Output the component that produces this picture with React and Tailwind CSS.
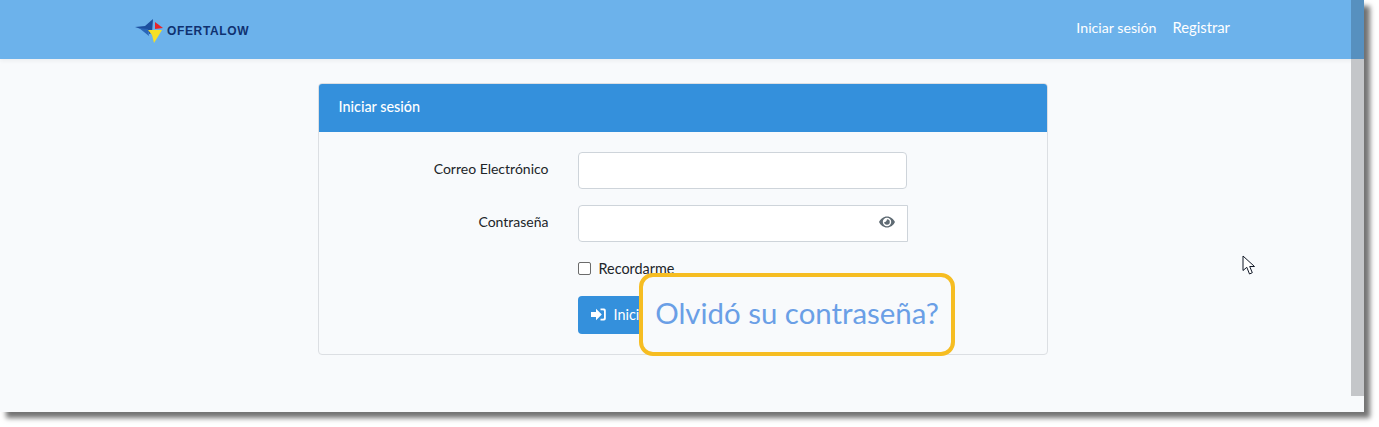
import React from "react";

function Logo() {
  return (
    <div className="flex translate-y-[1px] items-center">
      <svg width="29" height="24" viewBox="0 0 29 24" className="shrink-0">
        <path d="M0 8 L10 7 L18 0 L17 14 L14 15 L13 11 L9 11 Z" fill="#1d4f9f" />
        <path d="M4 9 L13 10 L14 17 Z" fill="#2a66b8" />
        <path d="M20 3 L28 9 L20 10 Z" fill="#e8232a" />
        <path d="M13 11 L27 11 L19 24 L17 16 Z" fill="#f6e024" />
      </svg>
      <span className="ml-[3px] text-[12px] font-bold tracking-[0.65px] text-[#0f3170] font-['Liberation_Sans',sans-serif] leading-none">OFERTALOW</span>
    </div>
  );
}

function Row({ label, children, className }) {
  return (
    <div className={"flex items-center " + className}>
      <label className="w-[230px] -translate-y-[2px] text-right text-[14px] text-[#212529]">{label}</label>
      <div className="ml-[29px]">{children}</div>
    </div>
  );
}

export default function App() {
  return (
    <div className="h-[427px] w-[1379px] overflow-hidden bg-white font-['Lato','Noto_Sans',sans-serif]">
      <div className="relative flex h-[412px] w-[1364px] flex-col bg-[#f8fafc] shadow-[6px_6px_5px_rgba(0,0,0,0.55)]">
        <header className="flex h-[59px] shrink-0 items-center justify-between bg-[#6cb2eb] pl-[135px] pr-[134px] shadow-[0_2px_4px_rgba(0,0,0,0.05)]">
          <Logo />
          <nav className="flex -translate-y-[2px] items-baseline gap-[16px] text-white">
            <span className="text-[14.2px]">Iniciar sesión</span>
            <span className="text-[14.8px]">Registrar</span>
          </nav>
        </header>
        <main className="flex justify-center pl-[1px] pt-[24px]">
          <div className="h-[272px] w-[730px] overflow-hidden rounded-[4px] border border-[#dcdfe3] bg-[#f8fafc]">
            <div className="flex h-[48px] items-center bg-[#3490dc] pb-[2px] pl-[20px] text-[14.4px] font-medium text-white">Iniciar sesión</div>
            <div className="pt-[20px]">
              <Row label="Correo Electrónico" className="h-[37px]">
                <div className="h-[37px] w-[329px] rounded-[4px] border border-[#ced4da] bg-white" />
              </Row>
              <Row label="Contraseña" className="mt-[16px] h-[37px]">
                <div className="flex h-[37px] w-[330px] items-center justify-end rounded-l-[4px] border border-[#ced4da] bg-white pb-[4px] pr-[12px]">
                  <svg width="16" height="12" viewBox="0 0 16 12">
                    <path fillRule="evenodd" fill="#5f6b73" d="M8 0.5 C11.6 0.5 14.6 3 16 6 C14.6 9 11.6 11.5 8 11.5 C4.4 11.5 1.4 9 0 6 C1.4 3 4.4 0.5 8 0.5 Z M8 1.8 A4.2 4.2 0 1 0 8 10.2 A4.2 4.2 0 1 0 8 1.8 Z" />
                    <path fill="#5f6b73" d="M8 3.2 A2.8 2.8 0 1 1 5.2 6 C5.6 6.3 7.5 6 8 3.2 Z" />
                  </svg>
                </div>
              </Row>
              <div className="mt-[20px] flex h-[13px] items-center pl-[259px]">
                <div className="h-[13px] w-[13px] rounded-[2px] border border-[#6b6b6b] bg-white" />
                <span className="ml-[8px] text-[14.4px] text-[#212529]">Recordarme</span>
              </div>
              <div className="mt-[21px] pl-[259px]">
                <button className="flex h-[38px] w-[110px] items-center rounded-[4px] bg-[#3490dc] pb-[1px] pl-[13px] text-[14.4px] text-white">
                  <svg width="15" height="13" viewBox="0 0 15 13" fill="white" className="mr-[8px]">
                    <path d="M0 4 H5 V0.8 L10.8 6.5 L5 12.2 V9 H0 Z" />
                    <path d="M9.5 0.5 H12.5 A2 2 0 0 1 14.8 2.5 V10.5 A2 2 0 0 1 12.5 12.5 H9.5 V10.8 H12 A1 1 0 0 0 13 10 V3 A1 1 0 0 0 12 2.2 H9.5 Z" />
                  </svg>
                  Iniciar
                </button>
              </div>
            </div>
          </div>
        </main>
        <div className="absolute left-[639px] top-[273px] flex h-[83px] w-[316px] items-center justify-center rounded-[14px] border-4 border-[#f6bd22] bg-[#f8fafc] pb-[2px] text-[29.4px] text-[#6a9fe6]">
          Olvidó su contraseña?
        </div>
        <div className="absolute left-[1351px] top-0 h-[59px] w-[13px] bg-[#5790bf]" />
        <div className="absolute left-[1351px] top-[59px] h-[337px] w-[13px] bg-[#c4c6c9]" />
        <svg width="16" height="22" viewBox="0 0 16 22" className="absolute left-[1242px] top-[255px]">
          <path d="M1 1 V15.5 L4.8 12.3 L7.5 19 L10.3 17.7 L7.7 11.5 H12.5 Z" fill="white" stroke="#111827" strokeWidth="1" strokeLinejoin="miter" />
        </svg>
      </div>
    </div>
  );
}
